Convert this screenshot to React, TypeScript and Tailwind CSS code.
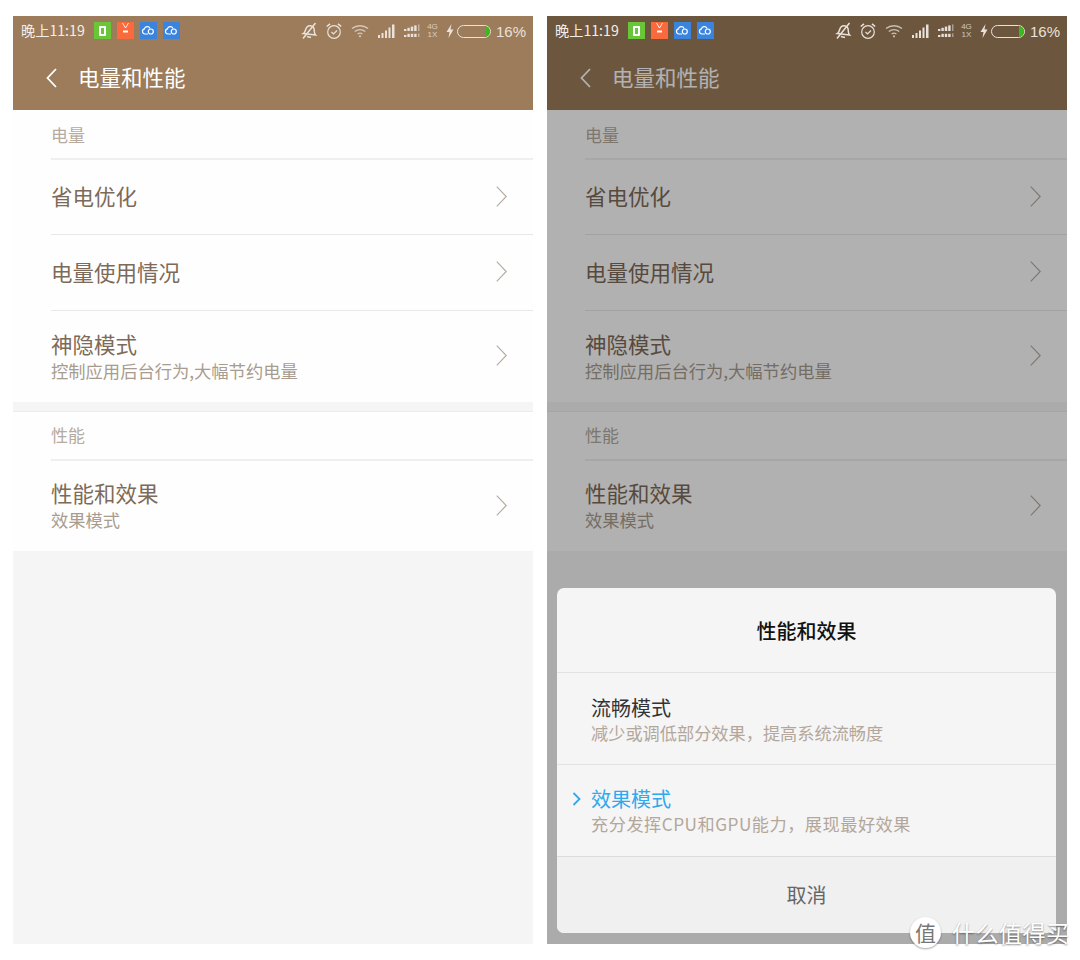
const FONT = "font-['Noto_Sans_CJK_SC','Noto_Sans',sans-serif]";

function Chevron({ className }: { className: string }) {
  return (
    <svg viewBox="0 0 10 20" fill="none" stroke="currentColor" strokeWidth="1.1" className={className}>
      <path d="M0.5 0.5 L9.5 10 L0.5 19.5" />
    </svg>
  );
}

function AppIcons() {
  return (
    <div className="flex items-center gap-[6px] ml-[8px]">
      <div className="w-[17px] h-[17px] bg-[#68c638] flex items-center justify-center">
        <div className="w-[7px] h-[10px] border-2 border-white rounded-[1px]" />
      </div>
      <div className="w-[17px] h-[17px] bg-[#fa6a3c] flex items-center justify-center">
        <svg viewBox="0 0 17 17" className="w-[17px] h-[17px]" fill="none" stroke="#fff" strokeWidth="0.9">
          <path d="M5.5 1 L8.5 6 L11.5 1" />
          <path d="M6 9.5 H11" strokeWidth="2" />
        </svg>
      </div>
      <CloudIcon />
      <CloudIcon />
    </div>
  );
}

function CloudIcon() {
  return (
    <div className="w-[17px] h-[17px] bg-[#3b84de] flex items-center justify-center">
      <svg viewBox="0 0 17 17" className="w-[17px] h-[17px]" fill="none" stroke="#fff" strokeWidth="1.2">
        <path d="M8 12 H5 A2.6 2.6 0 0 1 4.4 6.9 A3 3 0 0 1 10 6.4" />
        <circle cx="10.8" cy="9.5" r="2.5" />
      </svg>
    </div>
  );
}

function SystemIcons() {
  return (
    <div className="flex items-center text-[#e9e2da]">
      {/* muted bell */}
      <svg viewBox="0 0 18 18" className="w-[18px] h-[18px]" fill="none" stroke="currentColor" strokeWidth="1.5">
        <path d="M3.5 11.5 C5.5 10.5 5 7 7 5 C9 3 12 3.5 13.5 5.5 C15 7.5 13.5 11 15.5 13 Z" />
        <path d="M7 14.5 L11 15.5" />
        <path d="M15.5 1 L3 16.5" />
      </svg>
      {/* alarm */}
      <svg viewBox="0 0 18 18" className="w-[18px] h-[18px] ml-[7px]" fill="none" stroke="currentColor" strokeWidth="1.2">
        <circle cx="9" cy="10" r="6.3" />
        <path d="M6.5 10 L8.5 12 L12 8.5" />
        <path d="M1.8 4.5 L5 1.8 M16.2 4.5 L13 1.8" strokeWidth="1.6" />
      </svg>
      {/* wifi */}
      <svg viewBox="0 0 18 14" className="w-[18px] h-[14px] ml-[8px]" fill="none" stroke="currentColor" strokeWidth="1.4" opacity="0.75">
        <path d="M1 4.5 C5.5 0.8 12.5 0.8 17 4.5" />
        <path d="M3.8 7.5 C6.8 5 11.2 5 14.2 7.5" />
        <path d="M6.6 10 C8 9 10 9 11.4 10" />
        <circle cx="9" cy="12.3" r="1.1" fill="currentColor" stroke="none" />
      </svg>
      {/* signal 1 */}
      <svg viewBox="0 0 18 14" className="w-[18px] h-[14px] ml-[9px]" fill="currentColor">
        <rect x="0" y="11" width="2" height="3" />
        <rect x="3.5" y="9" width="2" height="5" />
        <rect x="7" y="6.5" width="2" height="7.5" />
        <rect x="10.5" y="3.5" width="2" height="10.5" />
        <rect x="14" y="0.5" width="2.5" height="13.5" />
      </svg>
      {/* signal 2, dashed */}
      <svg viewBox="0 0 20 14" className="w-[20px] h-[14px] ml-[8px]" fill="currentColor">
        <rect x="0" y="5" width="2.4" height="2" />
        <rect x="3.4" y="3.8" width="2.4" height="3.2" />
        <rect x="6.8" y="2.6" width="2.4" height="4.4" />
        <rect x="10.2" y="1.4" width="2.4" height="5.6" />
        <rect x="14" y="0.4" width="1.5" height="6.6" opacity="0.5" />
        <rect x="0" y="11" width="2.4" height="2" />
        <rect x="3.4" y="9.8" width="2.4" height="3.2" />
        <rect x="6.8" y="9.8" width="2.4" height="3.2" />
        <rect x="10.2" y="9.8" width="2.4" height="3.2" />
        <rect x="14" y="9.4" width="1.5" height="3.6" opacity="0.5" />
      </svg>
      <div className="ml-[3px] text-[8px] leading-[8px] w-[11px] text-center font-['Liberation_Sans',sans-serif] opacity-80">
        <div>4G</div>
        <div>1X</div>
      </div>
      {/* charging bolt */}
      <svg viewBox="0 0 8 14" className="w-[8px] h-[14px] ml-[8px]" fill="currentColor">
        <path d="M5.5 0 L0.5 8 H3.5 L2.5 14 L7.5 5.5 H4.5 Z" />
      </svg>
      {/* battery */}
      <div className="relative ml-[3px] w-[34px] h-[13px] rounded-full border border-[#e9e2da] overflow-hidden">
        <div className="absolute right-0 top-0 bottom-0 w-[5px] bg-[#3cb91e]" />
      </div>
      <span className="ml-[5px] text-[15px] font-['Liberation_Sans',sans-serif] leading-none">16%</span>
    </div>
  );
}

function Header() {
  return (
    <div className="bg-[#9c7c5a] h-[94px] flex flex-col">
      <div className="relative z-20 h-[30px] pl-[8px] pr-[7px] flex items-center justify-between">
        <div className="flex items-center">
          <span className="text-[14.2px] text-[#f3eee8] w-[65px] whitespace-nowrap">晚上11:19</span>
          <AppIcons />
        </div>
        <SystemIcons />
      </div>
      <div className="flex items-center h-[64px] pb-[1px] pl-[33px] text-white">
        <svg viewBox="0 0 11 20" fill="none" stroke="currentColor" strokeWidth="1.8" className="w-[11px] h-[20px]">
          <path d="M10 1 L1.5 10 L10 19" />
        </svg>
        <span className="ml-[21px] mb-[2px] text-[21.5px] leading-none">电量和性能</span>
      </div>
    </div>
  );
}

function SectionHead({ label, heightClass }: { label: string; heightClass: string }) {
  return (
    <div className="pl-[38px] bg-[#fefefe]">
      <div className={`${heightClass} border-b-2 border-[#efefef] flex items-center text-[17px] text-[#b5aba0]`}>
        {label}
      </div>
    </div>
  );
}

function Row({
  title,
  sub,
  heightClass,
  divider,
}: {
  title: string;
  sub?: string;
  heightClass: string;
  divider?: boolean;
}) {
  return (
    <div className="pl-[38px] bg-[#fefefe]">
      <div className={`${heightClass} ${divider ? "border-b border-[#e8e8e8]" : ""} flex items-center justify-between pr-[26px] pb-[2px]`}>
        <div className="flex flex-col">
          <span className="text-[21.5px] leading-[28px] text-[#7d6a58]">{title}</span>
          {sub && <span className="mt-[2px] text-[17.3px] leading-[22px] text-[#a89c8f]">{sub}</span>}
        </div>
        <Chevron className="w-[11px] h-[21px] text-[#b5aba0]" />
      </div>
    </div>
  );
}

function Dialog() {
  return (
    <div className="absolute z-20 left-[10px] right-[11px] bottom-[11px] rounded-[7px] overflow-hidden bg-[#f5f5f5]">
      <div className="h-[85px] pt-[2px] flex items-center justify-center border-b border-[#e2e2e2] text-[20px] font-medium text-[#111]">
        性能和效果
      </div>
      <div className="h-[92px] pl-[34px] flex flex-col justify-center border-b border-[#e2e2e2]">
        <span className="text-[20px] leading-[27px] text-[#333]">流畅模式</span>
        <span className="text-[17.2px] leading-[23px] text-[#b3a79b]">减少或调低部分效果，提高系统流畅度</span>
      </div>
      <div className="relative h-[92px] pl-[34px] pb-[2px] flex flex-col justify-center border-b border-[#dcdcdc]">
        <svg viewBox="0 0 9 14" fill="none" stroke="#2fa8ef" strokeWidth="1.8" className="absolute left-[15px] top-[27px] w-[9px] h-[14px]">
          <path d="M1.5 1 L7.5 7 L1.5 13" />
        </svg>
        <span className="text-[20px] leading-[27px] text-[#2fa8ef]">效果模式</span>
        <span className="text-[17.2px] leading-[23px] tracking-[0.5px] text-[#b3a79b]">充分发挥CPU和GPU能力，展现最好效果</span>
      </div>
      <div className="h-[76px] bg-[#f0f0f0] flex items-center justify-center text-[20px] text-[#666]">取消</div>
    </div>
  );
}

function Screen({ dimmed }: { dimmed?: boolean }) {
  return (
    <div className="relative w-[520px] h-[928px] bg-[#f5f5f5] flex flex-col overflow-hidden">
      <Header />
      <SectionHead label="电量" heightClass="h-[50px] pt-[2px]" />
      <Row title="省电优化" heightClass="h-[75px]" divider />
      <Row title="电量使用情况" heightClass="h-[76px]" divider />
      <Row title="神隐模式" sub="控制应用后台行为,大幅节约电量" heightClass="h-[91px]" />
      <div className="h-[10px] bg-[#f5f5f5] border-b border-[#ececec]" />
      <SectionHead label="性能" heightClass="h-[49px] pb-[2px]" />
      <Row title="性能和效果" sub="效果模式" heightClass="h-[90px]" />
      {dimmed && (
        <>
          <div className="absolute inset-0 z-10 bg-black/30" />
          <Dialog />
        </>
      )}
    </div>
  );
}

export default function App() {
  return (
    <div className={`relative w-[1080px] h-[960px] bg-white pt-[16px] pl-[13px] flex gap-[14px] ${FONT}`}>
      <Screen />
      <Screen dimmed />
      {/* watermark */}
      <div className="absolute z-30 left-[910px] top-[917px] flex items-center text-white [text-shadow:0_1px_2px_rgba(0,0,0,0.45)]">
        <div className="w-[31px] h-[31px] rounded-full bg-white text-[#777] flex items-center justify-center text-[21px] leading-none [text-shadow:none] shadow-[0_1px_2px_rgba(0,0,0,0.35)]">
          值
        </div>
        <span className="ml-[11px] text-[23px] leading-none tracking-[0.5px] whitespace-nowrap">什么值得买</span>
      </div>
    </div>
  );
}
